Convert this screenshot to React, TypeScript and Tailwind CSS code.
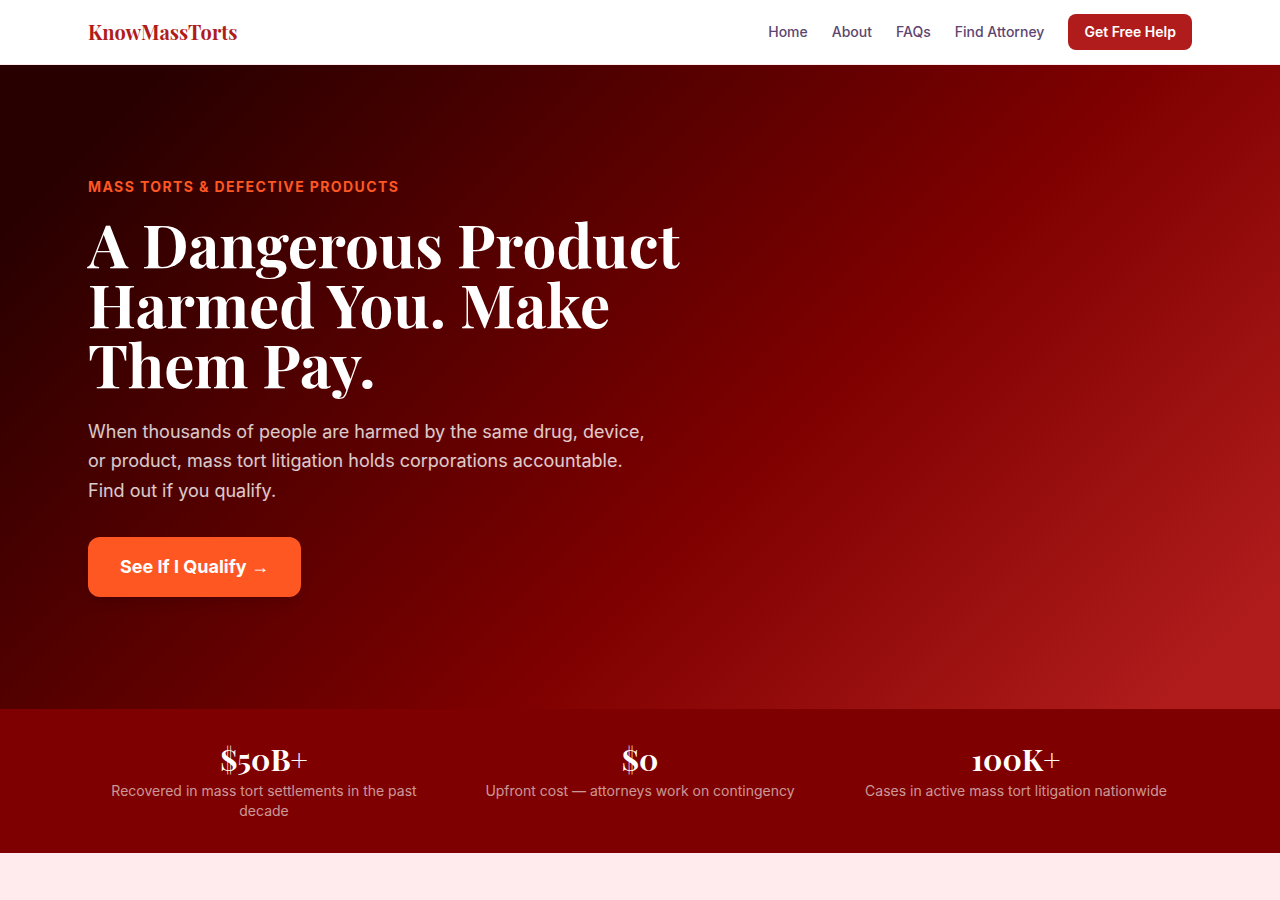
import React from "react";

const navLinks = [
  { label: "Home", href: "#home" },
  { label: "About", href: "#about" },
  { label: "FAQs", href: "#faqs" },
  { label: "Find Attorney", href: "#attorney" },
];

const stats = [
  { value: "$50B+", label: "Recovered in mass tort settlements in the past decade" },
  { value: "$0", label: "Upfront cost — attorneys work on contingency" },
  { value: "100K+", label: "Cases in active mass tort litigation nationwide" },
];

const Header = () => {
  return (
    <header className="bg-white border-b border-[#ffebee]">
      <div className="max-w-6xl mx-auto px-6 h-16 flex items-center justify-between">
        <a
          href="#home"
          className="font-['Playfair_Display','Liberation_Serif',serif] text-xl font-bold text-[#b01c1c]"
        >
          KnowMassTorts
        </a>
        <nav className="flex items-center gap-6 text-sm font-medium text-[#5d4570]">
          {navLinks.map((link) => (
            <a key={link.label} href={link.href}>
              {link.label}
            </a>
          ))}
          <a
            href="#help"
            className="rounded-lg bg-[#b01c1c] px-4 py-2 font-semibold text-white"
          >
            Get Free Help
          </a>
        </nav>
      </div>
    </header>
  );
};

const Hero = () => {
  return (
    <section
      id="home"
      className="bg-[linear-gradient(135deg,#290000_9%,#7f0000_60%,#b01c1c_94%)] text-white"
    >
      <div className="max-w-6xl mx-auto px-6 py-28">
        <p className="mb-4 text-sm font-bold uppercase tracking-widest text-[#ff5722]">
          Mass Torts &amp; Defective Products
        </p>
        <h1 className="mb-6 max-w-2xl font-['Playfair_Display','Liberation_Serif',serif] text-6xl leading-none font-bold">
          A Dangerous Product Harmed You. Make Them Pay.
        </h1>
        <p className="mb-8 max-w-xl text-lg leading-relaxed text-white/80">
          When thousands of people are harmed by the same drug, device, or
          product, mass tort litigation holds corporations accountable. Find out
          if you qualify.
        </p>
        <a
          href="#qualify"
          className="inline-block rounded-xl bg-[#ff5722] px-8 py-4 text-lg font-bold shadow-lg"
        >
          See If I Qualify{" "}
          <span className="font-['Liberation_Sans',sans-serif]">→</span>
        </a>
      </div>
    </section>
  );
};

const Stats = () => {
  return (
    <section className="bg-[#7f0000] text-white">
      <div className="max-w-6xl mx-auto px-6 py-8 grid grid-cols-3 gap-6 text-center">
        {stats.map((stat) => (
          <div key={stat.value}>
            <p className="font-['Playfair_Display','Liberation_Serif',serif] text-3xl font-bold">
              {stat.value}
            </p>
            <p className="mt-1 text-sm text-white/60">{stat.label}</p>
          </div>
        ))}
      </div>
    </section>
  );
};

const App = () => {
  return (
    <div className="min-h-screen bg-[#ffebee] font-['Inter','Liberation_Sans',sans-serif]">
      <Header />
      <main>
        <Hero />
        <Stats />
      </main>
    </div>
  );
};

export default App;
